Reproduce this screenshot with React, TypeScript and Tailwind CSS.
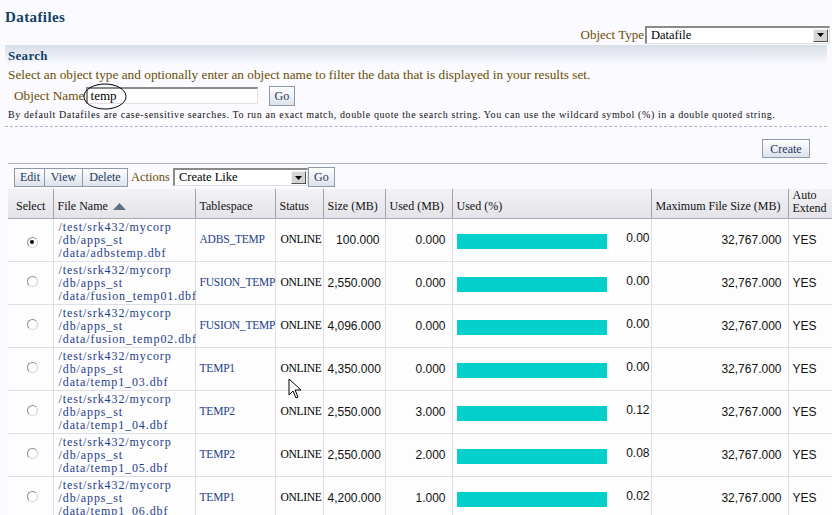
const serif = "font-['Liberation_Serif',serif]"
const sans = "font-['Liberation_Sans',sans-serif]"

interface Row {
  path: string[]
  ts: string
  size: string
  used: string
  pct: string
  checked?: boolean
}

const rows: Row[] = [
  { path: ["/test/srk432/mycorp", "/db/apps_st", "/data/adbstemp.dbf"], ts: "ADBS_TEMP", size: "100.000", used: "0.000", pct: "0.00", checked: true },
  { path: ["/test/srk432/mycorp", "/db/apps_st", "/data/fusion_temp01.dbf"], ts: "FUSION_TEMP", size: "2,550.000", used: "0.000", pct: "0.00" },
  { path: ["/test/srk432/mycorp", "/db/apps_st", "/data/fusion_temp02.dbf"], ts: "FUSION_TEMP", size: "4,096.000", used: "0.000", pct: "0.00" },
  { path: ["/test/srk432/mycorp", "/db/apps_st", "/data/temp1_03.dbf"], ts: "TEMP1", size: "4,350.000", used: "0.000", pct: "0.00" },
  { path: ["/test/srk432/mycorp", "/db/apps_st", "/data/temp1_04.dbf"], ts: "TEMP2", size: "2,550.000", used: "3.000", pct: "0.12" },
  { path: ["/test/srk432/mycorp", "/db/apps_st", "/data/temp1_05.dbf"], ts: "TEMP2", size: "2,550.000", used: "2.000", pct: "0.08" },
  { path: ["/test/srk432/mycorp", "/db/apps_st", "/data/temp1_06.dbf"], ts: "TEMP1", size: "4,200.000", used: "1.000", pct: "0.02" },
]

function Btn({ children, className = "" }: { children: React.ReactNode; className?: string }) {
  return (
    <button
      className={`h-[19px] px-[5px] border border-[#8d99ad] bg-gradient-to-b from-[#ffffff] to-[#dde2ea] text-[#1d3a5e] text-[12px] leading-none ${className}`}
    >
      {children}
    </button>
  )
}

function Select({ value, className = "" }: { value: string; className?: string }) {
  return (
    <div className={`flex items-center h-[18px] bg-white border-t-2 border-l-2 border-[#8a8a8a] border-r border-b border-r-[#e0e0e0] border-b-[#e0e0e0] ${className}`}>
      <span className="flex-1 pl-[4px] text-[12.5px] text-black leading-none">{value}</span>
      <span className="w-[15px] h-[13px] mr-[1px] bg-[#d4d4d4] border border-[#f4f4f4] border-r-[#555] border-b-[#555] flex items-center justify-center">
        <svg width="7" height="4" viewBox="0 0 7 4"><path d="M0 0h7L3.5 4z" fill="#000" /></svg>
      </span>
    </div>
  )
}

function Radio({ checked }: { checked?: boolean }) {
  return (
    <span className="inline-flex w-[11px] h-[11px] rounded-full border border-[#8d8d8d] border-b-[#d8d8d8] border-r-[#d0d0d0] bg-white items-center justify-center">
      {checked && <span className="w-[4px] h-[4px] rounded-full bg-black" />}
    </span>
  )
}

const th = "border-r border-[#a3a3aa] text-left font-normal px-[4px] align-bottom pb-[3px] text-[12px] text-[#111]"
const td = "border-r border-b border-[#dfdfe6] px-[4px] align-middle"

export default function App() {
  return (
    <div className={`relative w-[832px] h-[515px] overflow-hidden bg-[#fbfaff] ${serif} text-[12px]`}>
      <div className="px-[5px] pt-[8px] h-[26px] text-[15px] font-bold tracking-[0.4px] text-[#123f66] leading-[18px]">Datafiles</div>

      <div className="flex justify-end items-center h-[17px] pr-[2px]">
        <span className="text-[#6a4f00] text-[13px] mr-[1px]">Object Type</span>
        <Select value="Datafile" className="w-[185px]" />
      </div>

      <div className="mx-[5px] mt-[2px] h-[18px] bg-gradient-to-b from-[#d8dee8] to-[#f7f8fc] px-[3px] flex items-end">
        <span className="text-[13px] font-bold tracking-[0.3px] text-[#123f66] leading-[15px]">Search</span>
      </div>

      <div className="px-[8px] mt-[4px] h-[16px] text-[#6a4f00] text-[13.3px] leading-[16px] whitespace-nowrap">
        Select an object type and optionally enter an object name to filter the data that is displayed in your results set.
      </div>

      <div className="flex items-center pl-[14px] mt-[3px] h-[19px]">
        <span className="text-[#6a4f00] text-[13.3px]">Object Name</span>
        <div className="relative ml-[1px] w-[172px] h-[17px] bg-white border-t-2 border-l-2 border-[#8a8a8a] border-r border-b border-r-[#e6e0e0] border-b-[#e6e0e0] flex items-center pl-[3px] text-[13px] text-black">
          temp
          <svg className="absolute left-[-5px] top-[-6px]" width="44" height="27" viewBox="0 0 44 27">
            <ellipse cx="22" cy="13.5" rx="21" ry="12.5" fill="none" stroke="#000" strokeWidth="1" />
          </svg>
        </div>
        <Btn className="ml-[11px] w-[26px] h-[20px]">Go</Btn>
      </div>

      <div className="px-[8px] mt-[2px] h-[16px] text-[10px] tracking-[0.6px] leading-[16px] text-[#111] whitespace-nowrap">
        By default Datafiles are case-sensitive searches. To run an exact match, double quote the search string. You can use the wildcard symbol (%) in a double quoted string.
      </div>

      <div className="mx-[5px] mt-[3px] border-t border-dashed border-[#aab5cc]" />

      <div className="flex justify-end pr-[22px] mt-[12px]">
        <Btn className="w-[48px]">Create</Btn>
      </div>

      <div className="ml-[8px] mr-[5px] mt-[5px] border-t border-[#aab5cc]" />

      <div className="flex items-center pl-[14px] mt-[3px] h-[20px]">
        <Btn className="w-[31px]">Edit</Btn>
        <Btn className="w-[38px] border-l-0">View</Btn>
        <Btn className="w-[45px] border-l-0">Delete</Btn>
        <span className="text-[#6a4f00] text-[12.5px] ml-[3px] mr-[3px]">Actions</span>
        <Select value="Create Like" className="w-[135px]" />
        <Btn className="w-[27px] h-[20px]">Go</Btn>
      </div>

      <table className="ml-[8px] mt-[2px] border-collapse table-fixed w-[840px]">
        <colgroup>
          <col className="w-[45px]" />
          <col className="w-[142px]" />
          <col className="w-[80px]" />
          <col className="w-[48px]" />
          <col className="w-[62px]" />
          <col className="w-[67px]" />
          <col className="w-[199px]" />
          <col className="w-[137px]" />
          <col className="w-[60px]" />
        </colgroup>
        <thead>
          <tr className="h-[28px] bg-gradient-to-b from-[#f3f3f6] to-[#e3e3e9] border-b border-[#a8a8b0]">
            <th className={`${th} text-center pl-[8px]`}>Select</th>
            <th className={th}>
              <span className="inline-flex items-center gap-[5px]">
                File Name
                <svg width="13" height="7" viewBox="0 0 13 7"><path d="M6.5 0L13 7H0z" fill="#5f6f86" /></svg>
              </span>
            </th>
            <th className={th}>Tablespace</th>
            <th className={th}>Status</th>
            <th className={th}>Size (MB)</th>
            <th className={th}>Used (MB)</th>
            <th className={th}>Used (%)</th>
            <th className={th}>Maximum File Size (MB)</th>
            <th className={`${th} text-[11.5px] leading-[13px] pb-0`}>Auto<br />Extend</th>
          </tr>
        </thead>
        <tbody className="bg-[#fcfdfc]">
          {rows.map((r, i) => (
            <tr key={i} className="h-[43px]">
              <td className={`${td} text-center pl-[8px]`}><Radio checked={r.checked} /></td>
              <td className={`${td} text-[12px] tracking-[0.9px] leading-[13px] text-[#1f3c8c] whitespace-nowrap pl-[5px] pr-0`}>
                {r.path.map((p, j) => <div key={j}>{p}</div>)}
              </td>
              <td className={`${td} text-[11.5px] tracking-[-0.2px] text-[#1f3c8c] whitespace-nowrap pr-0`}>{r.ts}</td>
              <td className={`${td} text-[11.5px] tracking-[-0.3px] text-black pl-[5px] pr-0`}>ONLINE</td>
              <td className={`${td} ${sans} text-[12px] text-right text-[#111] pr-[5px]`}>{r.size}</td>
              <td className={`${td} ${sans} text-[12px] text-right text-[#111] pr-[6px]`}>{r.used}</td>
              <td className={`${td} pr-[1px]`}>
                <div className="flex items-start justify-between">
                  <div className="w-[150px] h-[15px] bg-[#03cfcb] mt-[2px]" />
                  <span className={`${sans} text-[12px] leading-[12px] text-[#111]`}>{r.pct}</span>
                </div>
              </td>
              <td className={`${td} ${sans} text-[12px] text-right text-[#111] pr-[6px]`}>32,767.000</td>
              <td className={`${td} ${sans} text-[12px] text-[#111] pl-[4px]`}>YES</td>
            </tr>
          ))}
        </tbody>
      </table>

      <svg className="absolute left-[288px] top-[378px]" width="14" height="21" viewBox="0 0 14 21">
        <path d="M1 1v16l4-4 3 7 2-1-3-7h6z" fill="#fff" stroke="#000" strokeWidth="1" strokeLinejoin="round" />
      </svg>
    </div>
  )
}
